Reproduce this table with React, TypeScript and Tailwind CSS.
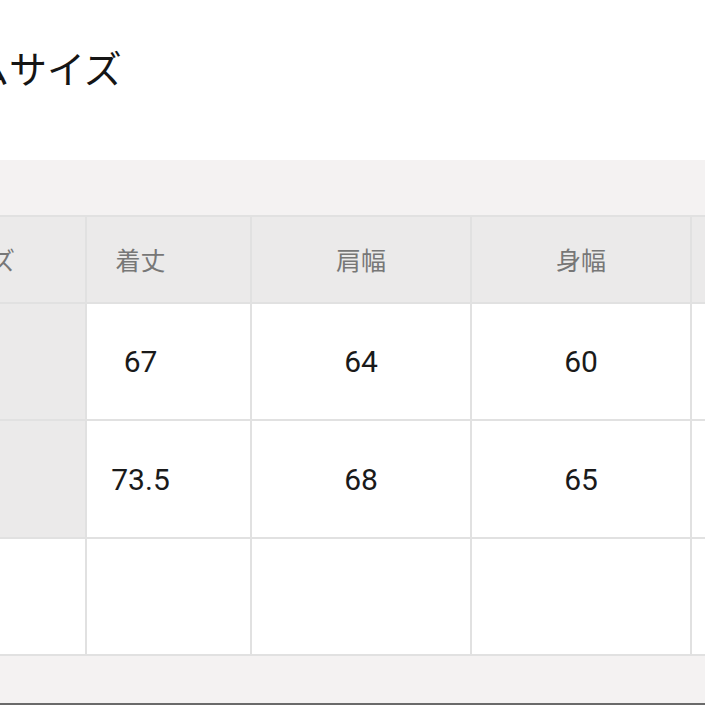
// App.tsx — size table screenshot

const jp = "font-['Noto_Sans_CJK_JP','Noto_Sans',sans-serif]";
const num = "font-['Roboto','Liberation_Sans',sans-serif]";

const rows = [
  { gray: true, values: ['67', '64', '60'] },
  { gray: true, values: ['73.5', '68', '65'] },
  { gray: false, values: ['', '', ''] },
];

export default function App() {
  return (
    <div className="w-[705px] h-[705px] overflow-hidden bg-white flex flex-col">
      {/* タイトル */}
      <div className="h-[160px] shrink-0 pt-[48px]">
        <h1 className={`${jp} -ml-[29px] text-[38px] leading-none text-[#151515] whitespace-nowrap`}>
          ムサイズ
        </h1>
      </div>

      {/* 上の帯 */}
      <div className="h-[55px] shrink-0 bg-[#f4f2f2]" />

      {/* 表 */}
      <div className="grid shrink-0 grid-cols-[85px_163px_218px_218px_1fr] gap-[2px] py-[2px] bg-[#e1e1e1]">
        {/* ヘッダー */}
        <div className={`${jp} h-[85px] bg-[#ebeaea] flex items-center justify-end overflow-hidden pr-[70px] text-[25px] text-[#777777] whitespace-nowrap`}>
          サイズ
        </div>
        <div className={`${jp} h-[85px] bg-[#ebeaea] flex items-center justify-center pr-[56px] text-[25px] text-[#777777]`}>
          着丈
        </div>
        <div className={`${jp} h-[85px] bg-[#ebeaea] flex items-center justify-center text-[25px] text-[#777777]`}>
          肩幅
        </div>
        <div className={`${jp} h-[85px] bg-[#ebeaea] flex items-center justify-center text-[25px] text-[#777777]`}>
          身幅
        </div>
        <div className="h-[85px] bg-[#ebeaea]" />

        {rows.map((row, i) => (
          <div key={i} className="contents">
            <div className={`${i === 1 ? 'h-[116px]' : 'h-[115px]'} ${row.gray ? 'bg-[#ebeaea]' : 'bg-white'}`} />
            <div className={`${num} bg-white flex items-center justify-center pr-[56px] text-[30px] text-[#1a1a1a]`}>
              {row.values[0]}
            </div>
            <div className={`${num} bg-white flex items-center justify-center text-[30px] text-[#1a1a1a]`}>
              {row.values[1]}
            </div>
            <div className={`${num} bg-white flex items-center justify-center text-[30px] text-[#1a1a1a]`}>
              {row.values[2]}
            </div>
            <div className="bg-white" />
          </div>
        ))}
      </div>

      {/* 下の帯 */}
      <div className="flex-1 bg-[#f4f2f2] border-b-2 border-[#6a6a6a]" />
    </div>
  );
}
